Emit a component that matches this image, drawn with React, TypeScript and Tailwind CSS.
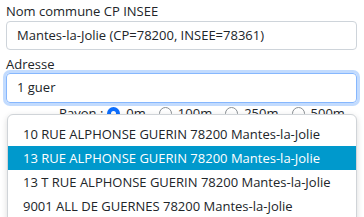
import { useState } from "react";

const suggestions = [
  "10 RUE ALPHONSE GUERIN 78200 Mantes-la-Jolie",
  "13 RUE ALPHONSE GUERIN 78200 Mantes-la-Jolie",
  "13 T RUE ALPHONSE GUERIN 78200 Mantes-la-Jolie",
  "9001 ALL DE GUERNES 78200 Mantes-la-Jolie",
];

const rayons = ["0m", "100m", "250m", "500m"];

export default function App() {
  const [active] = useState(1);
  const [rayon] = useState("0m");

  return (
    <div
      className="w-[364px] h-[217px] overflow-hidden bg-white px-[6px] pt-[2px] text-[13px] text-[#212529]"
      style={{ fontFamily: '"Open Sans", "Noto Sans", sans-serif' }}
    >
      <label className="block leading-[18px] mb-[1px]">Nom commune CP INSEE</label>
      <div className="flex items-center h-[29px] w-[351px] rounded-[4px] border border-[#ced4da] px-[10px]">
        Mantes-la-Jolie (CP=78200, INSEE=78361)
      </div>

      <label className="block leading-[18px] mt-[5px]">Adresse</label>
      <div className="relative w-[351px]">
        <div className="flex items-center h-[30px] rounded-[4px] border border-[#86b7fe] px-[10px] shadow-[0_0_0_3px_rgba(13,110,253,0.25)]">
          1 guer
        </div>

        <div className="flex items-center h-[18px] mt-[1px] pl-[53px] leading-[18px] whitespace-nowrap">
          <span className="shrink-0 mr-[4px]">Rayon :</span>
          {rayons.map((r) => (
            <span key={r} className="shrink-0 flex items-center mr-[13px] last:mr-0">
              {rayon === r ? (
                <span className="w-[13px] h-[13px] rounded-full border-[4px] border-[#0d6efd] bg-white" />
              ) : (
                <span className="w-[13px] h-[13px] rounded-full border border-[#8a8f94] bg-white" />
              )}
              <span className="ml-[6px]">{r}</span>
            </span>
          ))}
        </div>

        <ul className="absolute left-[1px] top-[41px] w-[350px] rounded-[6px] border border-[#d0d4d8] bg-white py-[7px] shadow-[0_2px_6px_rgba(0,0,0,0.15)]">
          {suggestions.map((s, i) => (
            <li
              key={s}
              className={
                i === active
                  ? "h-[24px] leading-[24px] px-[15px] bg-[#0099cc] text-white"
                  : "h-[24px] leading-[24px] px-[15px] text-[#212529]"
              }
            >
              {s}
            </li>
          ))}
        </ul>
      </div>
    </div>
  );
}
